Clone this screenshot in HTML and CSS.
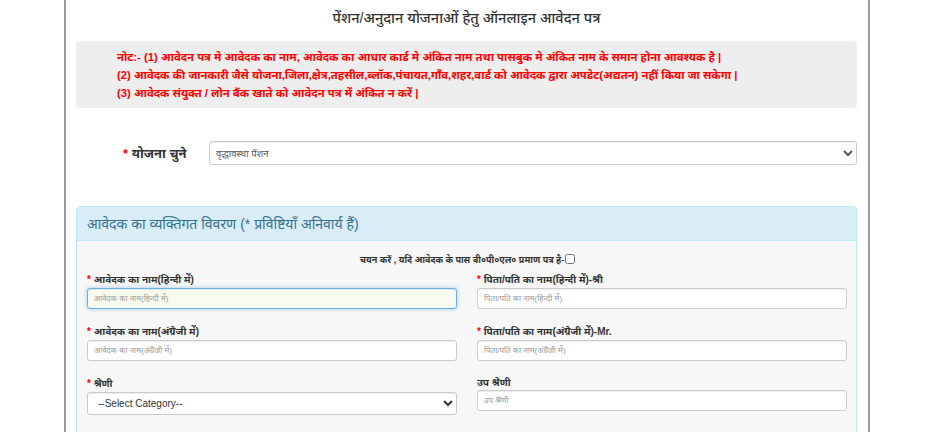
FILE: index.html
```html
<!DOCTYPE html>
<html lang="hi">
<head>
<meta charset="utf-8">
<title>पेंशन/अनुदान योजनाओं हेतु ऑनलाइन आवेदन पत्र</title>
<link rel="stylesheet" href="styles.css">
</head>
<body>
<div class="page">
  <h3 class="page-title">पेंशन/अनुदान योजनाओं हेतु ऑनलाइन आवेदन पत्र</h3>

  <div class="note">
    <p>नोट:- (1) आवेदन पत्र मे आवेदक का नाम, आवेदक का आधार कार्ड मे अंकित नाम तथा पासबुक मे अंकित नाम के समान होना आवश्यक है |</p>
    <p>(2) आवेदक की जानकारी जैसे योजना,जिला,क्षेत्र,तहसील,ब्लॉक,पंचायत,गाँव,शहर,वार्ड को आवेदक द्वारा अपडेट(अद्यतन) नहीं किया जा सकेगा |</p>
    <p>(3) आवेदक संयुक्त / लोन बैंक खाते को आवेदन पत्र में अंकित न करें |</p>
  </div>

  <div class="scheme-row">
    <label class="scheme-label"><span class="req">*</span> योजना चुने</label>
    <select class="form-control scheme-select">
      <option>वृद्धावस्था पेंशन</option>
    </select>
  </div>

  <div class="panel">
    <div class="panel-heading">आवेदक का व्यक्तिगत विवरण (* प्रविष्टियाँ अनिवार्य हैं)</div>
    <div class="panel-body">
      <div class="bpl-row">चयन करें , यदि आवेदक के पास बी०पी०एल० प्रमाण पत्र है-<input type="checkbox" class="bpl-check"></div>
      <div class="grid">
        <div class="field">
          <label><span class="req">*</span> आवेदक का नाम(हिन्दी में)</label>
          <input type="text" class="form-control focused" placeholder="आवेदक का नाम(हिन्दी में)">
        </div>
        <div class="field">
          <label><span class="req">*</span> पिता/पति का नाम(हिन्दी में)-श्री</label>
          <input type="text" class="form-control" placeholder="पिता/पति का नाम(हिन्दी में)">
        </div>
        <div class="field">
          <label><span class="req">*</span> आवेदक का नाम(अंग्रेजी में)</label>
          <input type="text" class="form-control" placeholder="आवेदक का नाम(अंग्रेजी में)">
        </div>
        <div class="field">
          <label><span class="req">*</span> पिता/पति का नाम(अंग्रेजी में)-Mr.</label>
          <input type="text" class="form-control" placeholder="पिता/पति का नाम(अंग्रेजी में)">
        </div>
        <div class="field">
          <label><span class="req">*</span> श्रेणी</label>
          <select class="form-control category-select">
            <option>--Select Category--</option>
          </select>
        </div>
        <div class="field sub-category">
          <label>उप श्रेणी</label>
          <input type="text" class="form-control" placeholder="उप श्रेणी">
        </div>
      </div>
    </div>
  </div>
</div>
</body>
</html>
```

FILE: styles.css
```css
* { box-sizing: border-box; }

html, body {
  margin: 0;
  padding: 0;
  background: #ffffff;
  font-family: "Liberation Sans", "Noto Sans", sans-serif;
  color: #333333;
  overflow: hidden;
}

.page {
  margin-left: 64px;
  width: 806px;
  min-height: 432px;
  border-left: 2px solid #9a9a9a;
  border-right: 2px solid #9a9a9a;
  padding: 0 11px 0 10px;
}

.page-title {
  margin: 0;
  padding-top: 7px;
  height: 41px;
  text-align: center;
  font-size: 14.5px;
  font-weight: 500;
  color: #333333;
}

.note {
  background: #eeeeee;
  border-radius: 4px;
  padding: 7px 10px 9px 41px;
  height: 67px;
}

.note p {
  margin: 0;
  color: #ff0000;
  font-size: 11.3px;
  line-height: 18px;
  font-weight: bold;
  white-space: nowrap;
}

.req { color: #ff0000; }

.scheme-row {
  display: flex;
  align-items: center;
  margin-top: 33px;
}

.scheme-label {
  width: 133px;
  padding-left: 47px;
  font-size: 13px;
  font-weight: bold;
  color: #333333;
}

.form-control {
  display: block;
  width: 100%;
  height: 21px;
  padding: 2px 6px;
  font-size: 8px;
  color: #555555;
  background: #ffffff;
  border: 1px solid #cccccc;
  border-radius: 3px;
  box-shadow: inset 0 1px 1px rgba(0, 0, 0, 0.075);
  font-family: "Liberation Sans", "Noto Sans", sans-serif;
}

.form-control::placeholder { color: #999999; }

.scheme-select {
  flex: 1;
  height: 24px;
  padding-left: 2px;
  font-size: 9.5px;
  color: #555555;
}

.panel {
  margin-top: 41px;
  border: 1px solid #bce8f1;
  border-radius: 4px;
  background: #f7f7f7;
  height: 240px;
}

.panel-heading {
  background: #d9edf7;
  color: #31708f;
  font-size: 14px;
  line-height: 20px;
  padding: 7px 10px 7px;
  height: 34px;
  border-bottom: 1px solid #bce8f1;
  border-radius: 3px 3px 0 0;
}

.panel-body {
  padding: 11px 10px 0 10px;
}

.bpl-row {
  text-align: center;
  font-size: 9px;
  font-weight: bold;
  color: #333333;
  display: flex;
  justify-content: center;
  align-items: center;
  height: 14px;
  padding-left: 2px;
}

.bpl-check {
  margin: 0 0 0 1px;
  width: 10px;
  height: 10px;
}

.grid {
  display: grid;
  grid-template-columns: 370px 370px;
  column-gap: 20px;
  row-gap: 14px;
  margin-top: 5px;
}

.field label {
  display: block;
  font-size: 10px;
  font-weight: bold;
  color: #333333;
  height: 17px;
  line-height: 17px;
}

.sub-category label {
  height: 15px;
  line-height: 15px;
}

.focused {
  border-color: #66afe9;
  background: #f8faf0;
  box-shadow: inset 0 1px 1px rgba(0, 0, 0, 0.075), 0 0 4px rgba(102, 175, 233, 0.6);
}

.category-select {
  height: 23px;
  padding-left: 6px;
  font-size: 10px;
  color: #333333;
}
```
